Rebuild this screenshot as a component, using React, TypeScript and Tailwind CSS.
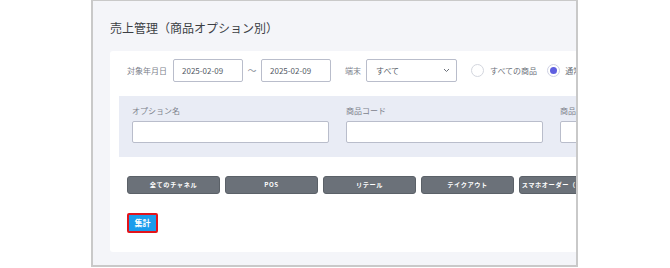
import React from "react";

const font = "font-['Noto_Sans_CJK_JP','Noto_Sans',sans-serif]";

function DateInput({ value }: { value: string }) {
  return (
    <div className="w-[70px] h-[23px] border border-[#b9bdcb] rounded-[2px] bg-white flex items-center pl-[8px] text-[8px] text-[#555b66]">
      {value}
    </div>
  );
}

function Field({ label }: { label: string }) {
  return (
    <div className="w-[197px] shrink-0">
      <div className="h-[11px] leading-[11px] text-[8px] text-[#7d828c] mb-[5px]">{label}</div>
      <div className="w-[197px] h-[22px] border border-[#b9bdcb] rounded-[2px] bg-white" />
    </div>
  );
}

function ChanBtn({ label }: { label: string }) {
  return (
    <div className="w-[93px] h-[18px] shrink-0 rounded-[3px] bg-[#6b7179] border border-[#5b6168] flex items-center justify-center text-white text-[6.2px] font-bold tracking-[0.6px] whitespace-nowrap overflow-hidden">
      {label}
    </div>
  );
}

export default function App() {
  return (
    <div className={`w-[670px] h-[268px] bg-white ${font}`}>
      <div className="ml-[91px] w-[487px] h-[267px] border-x-2 border-b-2 border-t border-[#c9c9c9] bg-[#f4f5f9] overflow-hidden">
        <div className="pl-[17px] pt-[18px]">
          <div className="h-[17px] leading-[17px] text-[12px] text-[#3c3f45] whitespace-nowrap">
            売上管理（商品オプション別）
          </div>
          <div className="mt-[15px] w-[600px] bg-white rounded-[3px] pt-[8px] pb-[19px]">
            {/* Row 1 */}
            <div className="pl-[17px] flex items-center h-[23px] whitespace-nowrap">
              <span className="text-[8px] text-[#7d828c] mr-[6px]">対象年月日</span>
              <DateInput value="2025-02-09" />
              <span className="w-[18px] text-center text-[9px] text-[#8a8f98]">〜</span>
              <DateInput value="2025-02-09" />
              <span className="ml-[14px] text-[8px] text-[#7d828c] mr-[5px]">端末</span>
              <div className="w-[91px] h-[23px] border border-[#b9bdcb] rounded-[2px] bg-white flex items-center justify-between pl-[9px] pr-[6px] text-[8px] text-[#555b66]">
                <span>すべて</span>
                <svg width="7" height="5" viewBox="0 0 7 5" fill="none">
                  <polyline points="1,1 3.5,3.5 6,1" stroke="#6b7079" strokeWidth="1" />
                </svg>
              </div>
              <div className="ml-[14px] w-[13px] h-[13px] rounded-full border border-[#d3d6de] bg-white" />
              <span className="ml-[6px] text-[8px] text-[#6b7079]">すべての商品</span>
              <div className="ml-[10px] w-[13px] h-[13px] rounded-full border border-[#cfd2e3] bg-white flex items-center justify-center">
                <div className="w-[7px] h-[7px] rounded-full bg-[#5f5fe0]" />
              </div>
              <span className="ml-[5px] text-[8px] text-[#6b7079]">通常商品</span>
            </div>

            {/* Panel */}
            <div className="mt-[14px] ml-[9px] bg-[#e9ecf5] pl-[13px] pt-[9px] pb-[14px] flex gap-[17px]">
              <Field label="オプション名" />
              <Field label="商品コード" />
              <Field label="商品名" />
            </div>

            {/* Channel buttons */}
            <div className="mt-[19px] pl-[17px] flex gap-[5px]">
              <ChanBtn label="全てのチャネル" />
              <ChanBtn label="POS" />
              <ChanBtn label="リテール" />
              <ChanBtn label="テイクアウト" />
              <ChanBtn label="スマホオーダー（テーブル）" />
            </div>

            {/* Submit */}
            <div className="mt-[19px] ml-[17px] w-[31px] h-[20px] rounded-[2px] bg-[#1b9cec] border-2 border-[#e3141b] flex items-center justify-center text-white text-[8px] font-bold">
              集計
            </div>
          </div>
        </div>
      </div>
    </div>
  );
}
